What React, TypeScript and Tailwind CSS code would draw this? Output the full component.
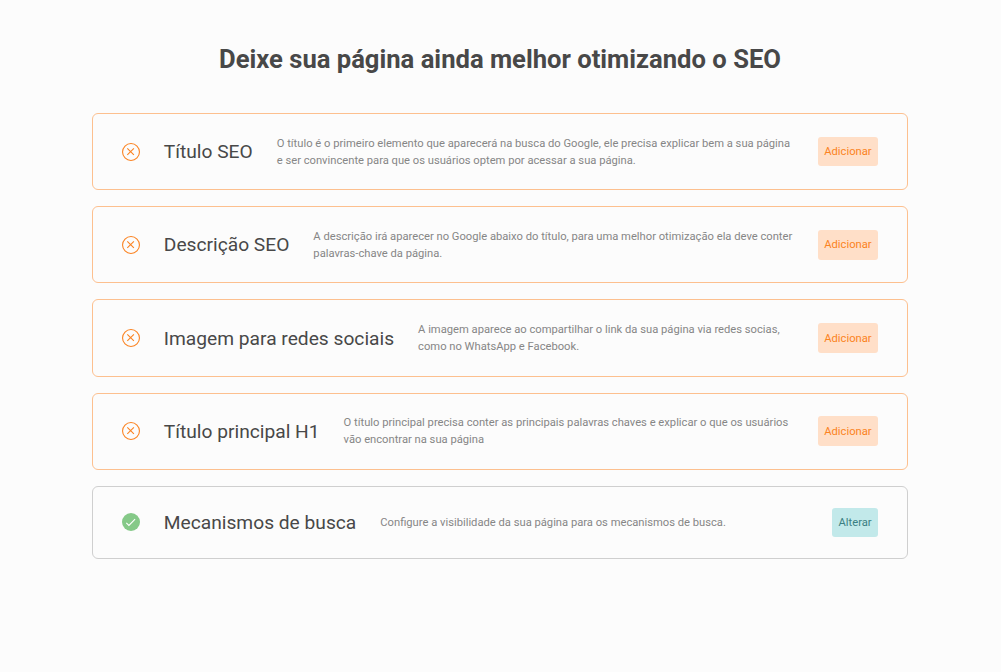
type Item = {
  title: string;
  description: string;
  done?: boolean;
};

const items: Item[] = [
  {
    title: "Título SEO",
    description:
      "O título é o primeiro elemento que aparecerá na busca do Google, ele precisa explicar bem a sua página e ser convincente para que os usuários optem por acessar a sua página.",
  },
  {
    title: "Descrição SEO",
    description:
      "A descrição irá aparecer no Google abaixo do título, para uma melhor otimização ela deve conter palavras-chave da página.",
  },
  {
    title: "Imagem para redes sociais",
    description:
      "A imagem aparece ao compartilhar o link da sua página via redes socias, como no WhatsApp e Facebook.",
  },
  {
    title: "Título principal H1",
    description:
      "O título principal precisa conter as principais palavras chaves e explicar o que os usuários vão encontrar na sua página",
  },
  {
    title: "Mecanismos de busca",
    description: "Configure a visibilidade da sua página para os mecanismos de busca.",
    done: true,
  },
];

function StatusIcon({ done }: { done?: boolean }) {
  if (done) {
    return (
      <svg viewBox="0 0 18 18" className="size-[18px] shrink-0" fill="none">
        <circle cx="9" cy="9" r="9" fill="#85c988" />
        <path d="M4.3 9.9l2.6 2.5 6.2-6.2" stroke="#fff" strokeWidth="1.1" />
      </svg>
    );
  }
  return (
    <svg viewBox="0 0 18 18" className="size-[18px] shrink-0" fill="none" stroke="#fb8322" strokeWidth="1.1">
      <circle cx="9" cy="9" r="8.45" />
      <path d="M5.3 5.3l6.6 6.6M11.9 5.3l-6.6 6.6" />
    </svg>
  );
}

function SeoCard({ title, description, done }: Item) {
  return (
    <div
      className={`flex items-center rounded-md border px-[29px] ${
        done ? "h-[73.4px] border-[#cfcfcf]" : "h-[77.2px] border-[#fdc08f]"
      }`}
    >
      <StatusIcon done={done} />
      <h2 className="ml-[23.8px] shrink-0 pt-[1.2px] text-[19.2px] leading-6 whitespace-nowrap text-[#484848]">
        {title}
      </h2>
      <p className="mr-6 ml-6 flex-1 pt-[1.9px] text-[11.2px] leading-[16.9px] text-[#868686]">
        {description}
      </p>
      <button
        className={`shrink-0 rounded-[3px] px-[6.4px] pt-[7.5px] pb-[5.3px] text-[11.2px] leading-[16.8px] ${
          done ? "bg-[#c2e9ea] text-[#3b7f82]" : "bg-[#ffdfc8] text-[#fb8322]"
        }`}
      >
        {done ? "Alterar" : "Adicionar"}
      </button>
    </div>
  );
}

export default function App() {
  return (
    <main className="min-h-screen bg-[#fcfcfc] pt-[42px] pl-[92px] font-['Roboto',sans-serif]">
      <div className="w-[816px]">
        <h1 className="text-center text-[25.6px] leading-[34px] font-bold text-[#484848]">
          Deixe sua página ainda melhor otimizando o SEO
        </h1>
        <div className="mt-[37px] flex flex-col gap-4">
          {items.map((item) => (
            <SeoCard key={item.title} {...item} />
          ))}
        </div>
      </div>
    </main>
  );
}
